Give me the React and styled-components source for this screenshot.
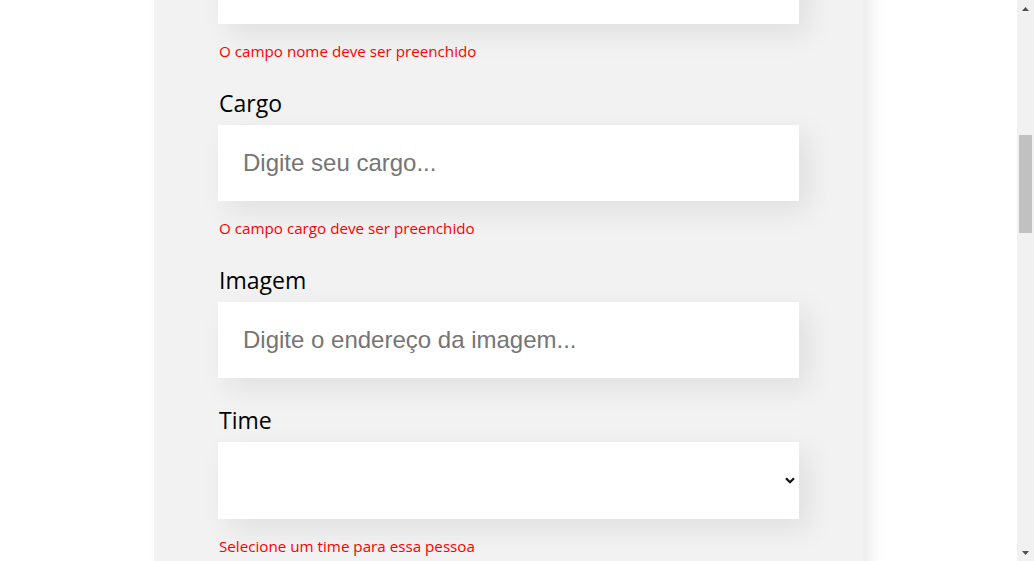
import { useLayoutEffect, useRef } from 'react';
import styled, { createGlobalStyle } from 'styled-components';

const GlobalStyle = createGlobalStyle`
  html, body {
    margin: 0;
    padding: 0;
    overflow: hidden;
    background: #fff;
  }
  body {
    font-family: 'Open Sans', 'Noto Sans', sans-serif;
  }
  * {
    box-sizing: border-box;
  }
`;

const Campo = ({ label, placeholder, erro, inputRef }) => (
  <Field>
    <Label>{label}</Label>
    <TextInput ref={inputRef} type="text" placeholder={placeholder} />
    {erro && <Erro>{erro}</Erro>}
  </Field>
);

const App = () => {
  const viewportRef = useRef(null);
  const nomeRef = useRef(null);

  // page is shown scrolled so the "Nome" input bottom sits at 24px
  useLayoutEffect(() => {
    const vp = viewportRef.current;
    const inp = nomeRef.current;
    if (!vp || !inp) return;
    const top = vp.getBoundingClientRect().top;
    const bottom = inp.getBoundingClientRect().bottom;
    vp.scrollTop = bottom - top - 24;
  }, []);

  return (
    <Page>
      <GlobalStyle />
      <Viewport ref={viewportRef}>
        <Formulario>
          <Form onSubmit={e => e.preventDefault()}>
            <Titulo>Preencha os dados para criar o card do colaborador.</Titulo>
            <Campo
              label="Nome"
              placeholder="Digite seu nome..."
              erro="O campo nome deve ser preenchido"
              inputRef={nomeRef}
            />
            <Campo
              label="Cargo"
              placeholder="Digite seu cargo..."
              erro="O campo cargo deve ser preenchido"
            />
            <Campo label="Imagem" placeholder="Digite o endereço da imagem..." />
            <Field>
              <Label>Time</Label>
              <SelectWrap>
                <Select defaultValue="">
                  <option value=""></option>
                  <option>Programação</option>
                  <option>Front-End</option>
                  <option>Data Science</option>
                  <option>Devops</option>
                  <option>UX e Design</option>
                  <option>Mobile</option>
                  <option>Inovação e Gestão</option>
                </Select>
                <Chevron width="10" height="7" viewBox="0 0 10 7">
                  <path d="M1 1.2 L5 5.2 L9 1.2" fill="none" stroke="#111" strokeWidth="2.2" />
                </Chevron>
              </SelectWrap>
              <Erro>Selecione um time para essa pessoa</Erro>
            </Field>
            <Botao type="submit">Criar card</Botao>
          </Form>
        </Formulario>
      </Viewport>
      <ScrollBar>
        <ArrowBtn>
          <svg width="7" height="4" viewBox="0 0 7 4">
            <path d="M0 4 L3.5 0 L7 4 Z" fill="#505050" />
          </svg>
        </ArrowBtn>
        <Track>
          <Thumb />
        </Track>
        <ArrowBtn>
          <svg width="7" height="4" viewBox="0 0 7 4">
            <path d="M0 0 L3.5 4 L7 0 Z" fill="#505050" />
          </svg>
        </ArrowBtn>
      </ScrollBar>
    </Page>
  );
};

export default App;

const Page = styled.div`
  display: flex;
  width: 100vw;
  height: 100vh;
`;

const Viewport = styled.div`
  flex: 1;
  height: 100%;
  overflow: hidden;
  background: #fff;
`;

const Formulario = styled.section`
  display: flex;
  justify-content: center;
  padding: 32px 0 80px;
`;

const Form = styled.form`
  width: 709px;
  padding: 36px 64px;
  background-color: #f2f2f2;
  border-radius: 20px;
  box-shadow: 8px 8px 16px rgba(0, 0, 0, 0.08);
`;

const Titulo = styled.h2`
  margin: 0 0 24px;
  font-size: 24px;
  font-weight: 400;
  line-height: 32px;
  color: #000;
`;

const Field = styled.div`
  margin: 24px 0;
`;

const Label = styled.label`
  display: block;
  margin-bottom: 6px;
  padding: 2px 0 0 1px;
  font-size: 23px;
  line-height: 32px;
  color: #000;
`;

const TextInput = styled.input`
  display: block;
  width: 100%;
  height: 76px;
  padding: 24px 24px 24px 25px;
  border: none;
  outline: none;
  background: #fff;
  font-family: 'Liberation Sans', Arial, sans-serif;
  font-size: 24px;
  line-height: 28px;
  box-shadow: 10px 10px 30px rgba(0, 0, 0, 0.08);

  &::placeholder {
    color: #757575;
  }
`;

const SelectWrap = styled.div`
  position: relative;
`;

const Select = styled.select`
  display: block;
  width: 100%;
  height: 77px;
  padding: 24px;
  border: none;
  border-radius: 0;
  outline: none;
  appearance: none;
  -webkit-appearance: none;
  background: #fff;
  font-family: 'Liberation Sans', Arial, sans-serif;
  font-size: 24px;
  box-shadow: 10px 10px 30px rgba(0, 0, 0, 0.08);
`;

const Chevron = styled.svg`
  position: absolute;
  right: 4px;
  top: 35px;
  pointer-events: none;
`;

const Erro = styled.p`
  margin: 16px 0;
  padding: 1px 0 0 1px;
  font-size: 15.2px;
  line-height: 20px;
  color: #ff0000;
`;

const Botao = styled.button`
  margin-top: 8px;
  padding: 20px 28px;
  border: none;
  border-radius: 10px;
  background: #6278f7;
  color: #fff;
  font-family: 'Open Sans', sans-serif;
  font-size: 18px;
  font-weight: 700;
`;

const ScrollBar = styled.div`
  display: flex;
  flex-direction: column;
  width: 17px;
  height: 100%;
  background: #f1f1f1;
`;

const ArrowBtn = styled.div`
  display: flex;
  align-items: center;
  justify-content: center;
  height: 17px;
  flex-shrink: 0;
`;

const Track = styled.div`
  flex: 1;
  padding: 118px 2px 0;
`;

const Thumb = styled.div`
  height: 98px;
  background: #c1c1c1;
`;
